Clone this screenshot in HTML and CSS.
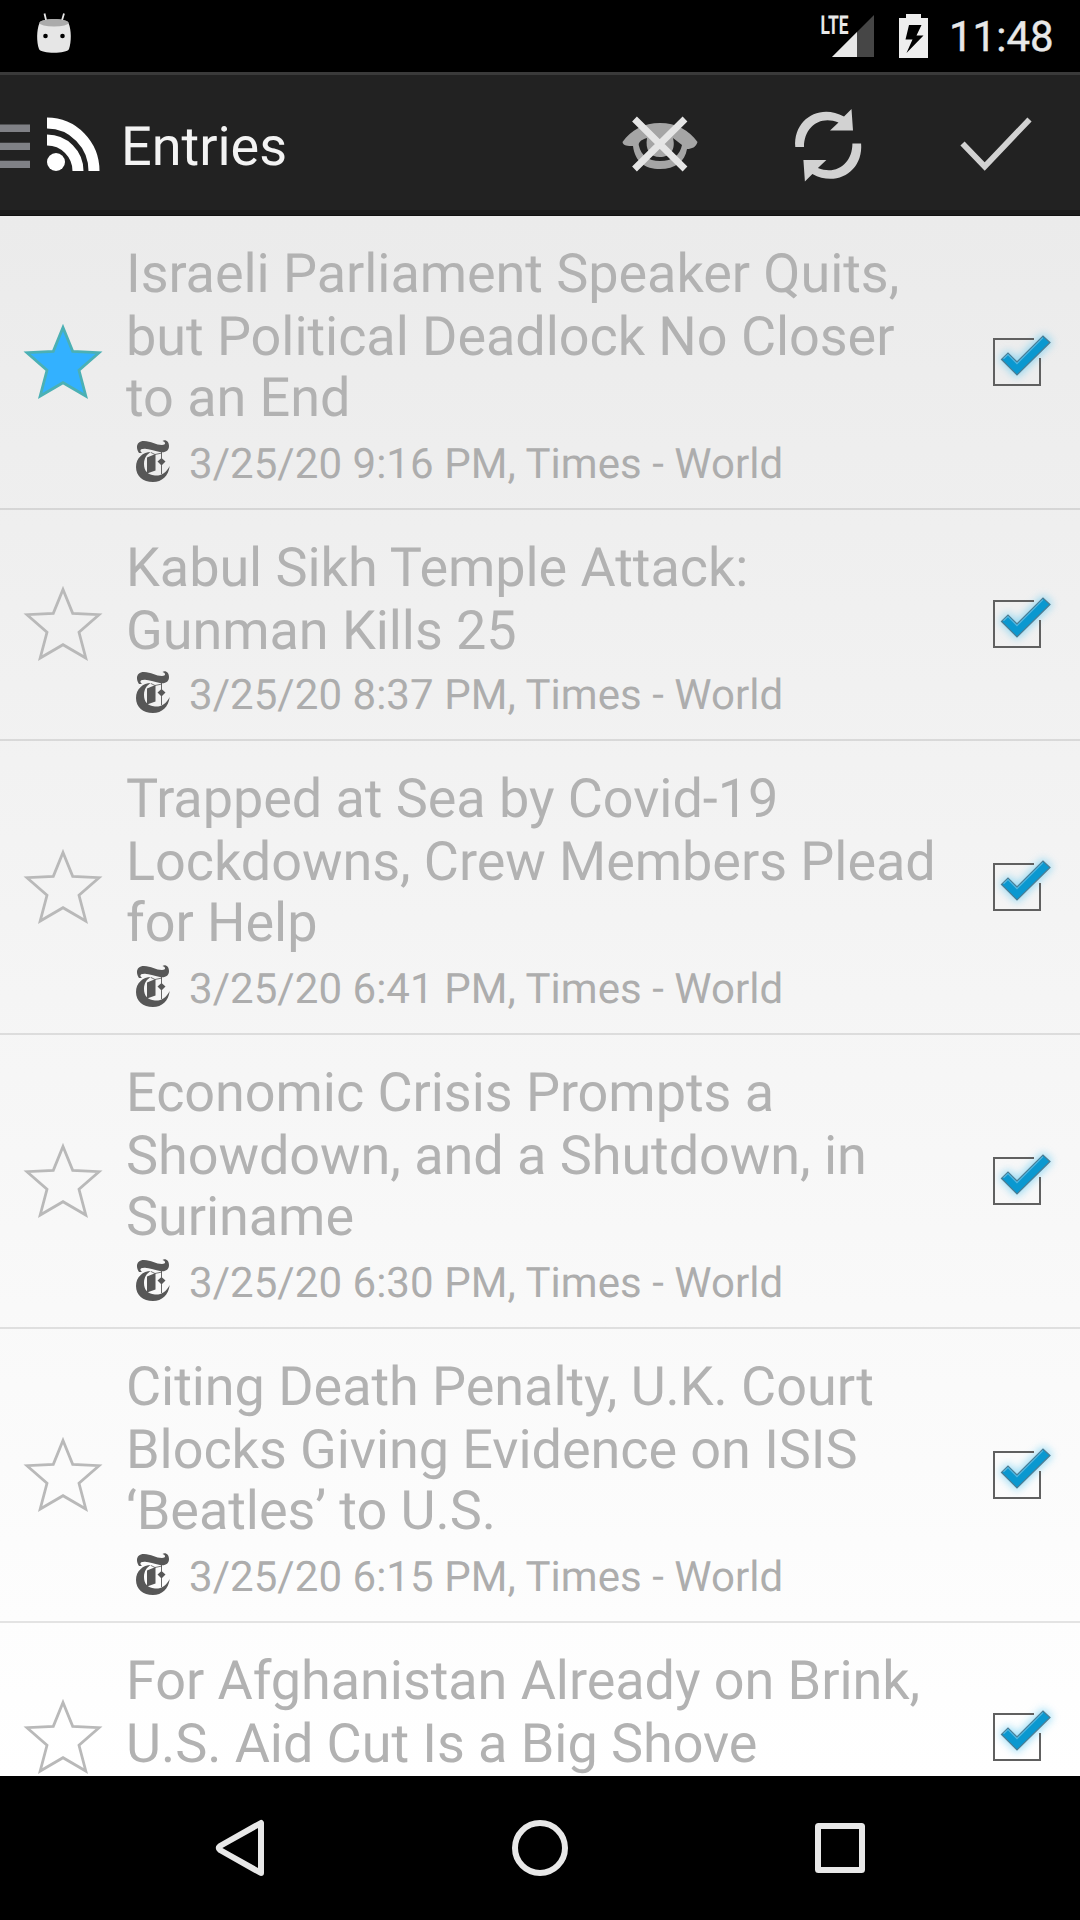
FILE: index.html
```
<!DOCTYPE html>
<html lang="en">
<head>
<meta charset="utf-8">
<title>Entries</title>
<link rel="stylesheet" href="styles.css">
</head>
<body>
<svg width="0" height="0" class="defs">
  <defs>
    <filter id="glow" x="-50%" y="-50%" width="200%" height="200%"><feGaussianBlur stdDeviation="4.500"/></filter>
    <symbol id="star" viewBox="21 322 84 82"><path d="M63 328.500L72.700 352.300L99 353.700L79 371.300L85.800 397L63 383.700L40.200 397L47 371.300L27 353.700L53.300 352.300Z" stroke-width="2.800"/></symbol>
    <symbol id="check" viewBox="980 320 90 84">
      <path d="M1002 359L1008 353L1017 362L1043 336L1050 342L1017 375Z" fill="#5cc8f2" stroke="#5cc8f2" stroke-width="4" opacity=".65" filter="url(#glow)"/>
      <path d="M1034 339H994V385H1040V358" fill="none" stroke="#606060" stroke-width="2"/>
      <path d="M1001.500 359.500L1008 353L1017 362L1043 336L1050 342.500L1017 375Z" fill="#0a98d0" stroke="#4d7c92" stroke-width="1.200"/>
      <path d="M1003.500 358.800L1008 354.500L1017 363.600L1043 337.600" fill="none" stroke="#58b5dc" stroke-width="1.200"/>
    </symbol>
    <symbol id="times" viewBox="136 440 34 42">
      <path d="M139 453C135 447 137 441 144 441C151 441 156 445 162 445C166 445 166 442 162.500 441C165 439 169 441 169 446C169 451 165 453 160 452C153 451 148 448 143 449C140 449 139.500 451 142 453Z"/>
      <path d="M151 452C143 452 136 458 136 467C136 476 143 482 153 482C162 482 168.500 476 169.700 466C166 473 161 476 155 475.500C147 475 144 470 144 464C144 458 147 454 151 452Z"/>
      <path d="M147 457.500L155.500 454V470.500L147 473.500ZM157.500 461.500L161.500 458L165.500 461.500L161.500 465.500ZM161 452h.900v22h-.900Z"/>
      <path d="M151 452.500L155 454.500L162 453" fill="none" stroke="#575757" stroke-width=".8"/>
    </symbol>
  </defs>
</svg>
<div class="screen">
  <div class="status">
    <svg width="100" height="72" viewBox="0 0 100 72">
      <path d="M44.500 13.500L46.500 22M64 13.500L61.500 22" stroke="#e6e6e6" stroke-width="1.800"/>
      <path d="M39.500 23C41 18 67 18 68.500 23C71.500 30 71.500 42 69 49C67 54 41 54 39 49C36.500 42 36.500 30 39.500 23Z" fill="#e6e6e6"/>
      <ellipse cx="54" cy="22.800" rx="14.600" ry="3.700" fill="#ababab"/>
      <circle cx="45.500" cy="36" r="2.300"/><circle cx="62.500" cy="36" r="2.300"/>
    </svg>
    <svg class="signals" width="130" height="72" viewBox="810 0 130 72">
      <text x="820.500" y="33.600" textLength="28" lengthAdjust="spacingAndGlyphs" class="lte">LTE</text>
      <path d="M874 15V57H832Z" fill="#464646"/>
      <path d="M857 32V57H832Z" fill="#e8e8e8"/>
      <path d="M906 14H921V18H928V58H899V18H906Z" fill="#eee"/>
      <path d="M909 25H921.500L916.500 35.500H923.500L906.500 53L912.500 39.500H905.500Z"/>
    </svg>
    <div class="clock">11:48</div>
  </div>
  <header class="bar">
    <svg width="115" height="144" viewBox="0 72 115 144">
      <path d="M0 124.500H30V132H0ZM0 142.700H30V150H0ZM0 160.800H30V168H0Z" fill="#808186"/>
      <g fill="none" stroke="#fff" stroke-width="11"><path d="M47 123A47 48 0 0 1 94 171M47 140A31 31 0 0 1 78 171"/></g>
      <circle cx="56" cy="162" r="9" fill="#fff"/>
    </svg>
    <h1>Entries</h1>
    <svg width="168" height="144" viewBox="576 72 168 144">
      <path fill-rule="evenodd" fill="#a5a5a5" d="M622.500 142C631 130 644 123 660 123C676 123 689 130 697.500 142C696 147 692 149 687 149C685 162 675 169 660 169C645 169 635 162 633 146C628 146 623 146 622.500 142ZM647 138C640 140 638 143 639 146C641 155 648 161 660 161C673 161 680 155 682 145L673 138C676 150 670 157 660 157C650 157 645 150 647 138Z"/>
      <path d="M634.500 119L685 169M685 119L634.500 169" stroke="#e5e5e5" stroke-width="6.800"/>
    </svg>
    <svg width="168" height="144" viewBox="744 72 168 144" fill="#d2d2d2">
      <path id="cycle" d="M795.300 147C793 119 820 103 844 116.500L851.500 109L853 130.500H830L838.500 122.500C820 115 804 127 804 147Z"/>
      <use href="#cycle" transform="rotate(180 828.200 145.200)"/>
    </svg>
    <svg width="168" height="144" viewBox="912 72 168 144">
      <path d="M962.500 143.500L984.700 166.500L1029.500 119.500" fill="none" stroke="#d2d2d2" stroke-width="5.800"/>
    </svg>
  </header>
  <main class="list">
    <article class="entry">
      <svg class="star on"><use href="#star"/></svg>
      <div class="text"><h2><span>Israeli Parliament Speaker Quits,</span><span>but Political Deadlock No Closer</span><span>to an End</span></h2>
      <p><svg class="logo"><use href="#times"/></svg>3/25/20 9:16 PM, Times - World</p></div>
      <svg class="check"><use href="#check"/></svg>
    </article>
    <article class="entry short">
      <svg class="star"><use href="#star"/></svg>
      <div class="text"><h2><span>Kabul Sikh Temple Attack:</span><span>Gunman Kills 25</span></h2>
      <p><svg class="logo"><use href="#times"/></svg>3/25/20 8:37 PM, Times - World</p></div>
      <svg class="check"><use href="#check"/></svg>
    </article>
    <article class="entry">
      <svg class="star"><use href="#star"/></svg>
      <div class="text"><h2><span>Trapped at Sea by Covid-19</span><span>Lockdowns, Crew Members Plead</span><span>for Help</span></h2>
      <p><svg class="logo"><use href="#times"/></svg>3/25/20 6:41 PM, Times - World</p></div>
      <svg class="check"><use href="#check"/></svg>
    </article>
    <article class="entry">
      <svg class="star"><use href="#star"/></svg>
      <div class="text"><h2><span>Economic Crisis Prompts a</span><span>Showdown, and a Shutdown, in</span><span>Suriname</span></h2>
      <p><svg class="logo"><use href="#times"/></svg>3/25/20 6:30 PM, Times - World</p></div>
      <svg class="check"><use href="#check"/></svg>
    </article>
    <article class="entry">
      <svg class="star"><use href="#star"/></svg>
      <div class="text"><h2><span>Citing Death Penalty, U.K. Court</span><span>Blocks Giving Evidence on ISIS</span><span>‘Beatles’ to U.S.</span></h2>
      <p><svg class="logo"><use href="#times"/></svg>3/25/20 6:15 PM, Times - World</p></div>
      <svg class="check"><use href="#check"/></svg>
    </article>
    <article class="entry short last">
      <svg class="star"><use href="#star"/></svg>
      <div class="text"><h2><span>For Afghanistan Already on Brink,</span><span>U.S. Aid Cut Is a Big Shove</span></h2></div>
      <svg class="check"><use href="#check"/></svg>
    </article>
  </main>
  <nav class="nav">
    <svg width="60" height="60" viewBox="210 1818 60 60"><path d="M261 1823V1873L220 1850Q217.500 1848 220 1846Z"/></svg>
    <svg width="60" height="60" viewBox="510 1818 60 60"><circle cx="540" cy="1848" r="25"/></svg>
    <svg width="60" height="60" viewBox="810 1818 60 60"><rect x="818" y="1826" width="44" height="44" rx=".5"/></svg>
  </nav>
</div>
</body>
</html>
```
FILE: styles.css
```
* { box-sizing: border-box; margin: 0; padding: 0; }
body { background: #000; font-family: Roboto, sans-serif; text-rendering: geometricPrecision; }
svg { display: block; flex: none; }
.defs { position: absolute; }
.screen { width: 1080px; height: 1920px; display: flex; flex-direction: column; overflow: hidden; }

.status { height: 72px; flex: none; display: flex; background: #000; }
.signals { margin-left: 710px; }
.lte { font-size: 26px; font-weight: 700; fill: #e8e8e8; }
.clock { margin-left: 9px; padding-top: 3px; font-size: 42px; line-height: 70px; font-weight: 400; color: #e8e8e8; -webkit-text-stroke: .4px #e8e8e8; }

.bar { height: 144px; flex: none; display: flex; background: linear-gradient(#3a3a3a 3px, #222 3px, #222 138px, #1b1b1b 138px, #1b1b1b 143px, #111 143px); }
.bar h1 { flex: 1; padding-left: 6px; font-size: 54px; line-height: 152px; height: 144px; font-weight: 400; color: #f3f3f3; }

.list { height: 1560px; flex: none; overflow: hidden; background: linear-gradient(#ebebeb, #fff); }
.entry { display: flex; align-items: center; border-bottom: 2px solid rgba(0, 0, 0, .1); padding-left: 21px; }
.star { width: 84px; height: 82px; fill: none; stroke: #b9b9b9; }
.star.on { fill: #33b1ff; stroke: #4bb0b4; }
.text { flex: 1; padding: 27px 0 8px 21px; color: #b2b2b2; }
.text h2 { font-size: 54px; font-weight: 400; letter-spacing: -.06px; }
.text h2 span { display: block; height: 63px; line-height: 63px; white-space: nowrap; }
.text h2 span:nth-child(3) { line-height: 59px; }
.text p { height: 68px; display: flex; font-size: 42px; line-height: 66px; letter-spacing: .05px; color: #adadad; white-space: nowrap; }
.logo { width: 34px; height: 42px; margin: 8px 19px 0 10px; fill: #575757; }
.check { width: 90px; height: 84px; margin-right: 10px; }
.short .star, .short .check { margin-bottom: 1px; }
.last { height: 231px; }
.last .text { align-self: flex-start; }

.nav { height: 144px; flex: none; display: flex; align-items: center; justify-content: space-between; padding: 0 210px; background: #000; }
.nav svg { fill: none; stroke: #e8e8e8; stroke-width: 6; stroke-linejoin: round; }
```
